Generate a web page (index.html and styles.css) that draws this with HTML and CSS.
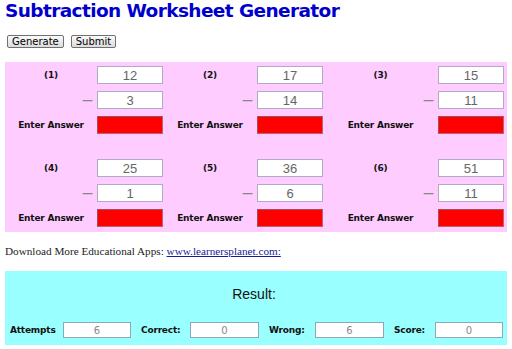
FILE: index.html
```html
<html>
    <head>
        <meta charset="UTF-8">
        <title>Subtraction Worksheet Generator</title>
        <link rel="stylesheet" href="styles.css">
    </head>
    <body>
        <h1 class="title">Subtraction Worksheet Generator</h1>
        <div class="actions">
            <button class="btn">Generate</button>
            <button class="btn">Submit</button>
        </div>

        <div class="sheet">
            <div class="problems">
                <div class="lbl">(1)</div><input class="num" value="12">
                <div class="lbl">(2)</div><input class="num" value="17">
                <div class="lbl">(3)</div><input class="num" value="15">
                <div class="minus">&mdash;</div><input class="num" value="3">
                <div class="minus">&mdash;</div><input class="num" value="14">
                <div class="minus">&mdash;</div><input class="num" value="11">
                <div class="lbl">Enter Answer</div><input class="answer">
                <div class="lbl">Enter Answer</div><input class="answer">
                <div class="lbl">Enter Answer</div><input class="answer">
            </div>
            <div class="problems">
                <div class="lbl">(4)</div><input class="num" value="25">
                <div class="lbl">(5)</div><input class="num" value="36">
                <div class="lbl">(6)</div><input class="num" value="51">
                <div class="minus">&mdash;</div><input class="num" value="1">
                <div class="minus">&mdash;</div><input class="num" value="6">
                <div class="minus">&mdash;</div><input class="num" value="11">
                <div class="lbl">Enter Answer</div><input class="answer">
                <div class="lbl">Enter Answer</div><input class="answer">
                <div class="lbl">Enter Answer</div><input class="answer">
            </div>
        </div>

        <p class="more">Download More Educational Apps: <a href="#">www.learnersplanet.com:</a></p>

        <div class="result">
            <div class="result-title">Result:</div>
            <div class="stats">
                <div class="stat first">Attempts</div><input class="score" value="6" readonly>
                <div class="stat">Correct:</div><input class="score" value="0" readonly>
                <div class="stat">Wrong:</div><input class="score" value="6" readonly>
                <div class="stat">Score:</div><input class="score" value="0" readonly>
            </div>
        </div>
    </body>
</html>
```

FILE: styles.css
```css
body {
    margin: 0 5px;
    font-family: "DejaVu Sans", Verdana, sans-serif;
    background: #fff;
}
.title {
    margin: 0;
    font-size: 18.5px;
    letter-spacing: -0.6px;
    line-height: 22px;
    font-weight: bold;
    color: #0000cc;
}
.actions {
    margin-top: 13px;
    padding-left: 2px;
    display: flex;
    gap: 7px;
    height: 27px;
}
.btn {
    font-family: "DejaVu Sans", Verdana, sans-serif;
    font-size: 10px;
    height: 13px;
    line-height: 11px;
    padding: 0 4px;
    border: 1px solid #707070;
    border-radius: 2px;
    background: linear-gradient(#fafafa, #dcdcdc);
    color: #000;
}
.sheet {
    background: #ffccff;
    padding: 4px 3px 5px 0;
}
.problems {
    display: grid;
    grid-template-columns: 92px 66px 94px 66px 115px 66px;
    row-gap: 7px;
    align-items: center;
}
.problems + .problems {
    margin-top: 25px;
}
.lbl {
    font-size: 9px;
    letter-spacing: -0.2px;
    font-weight: bold;
    text-align: center;
    color: #111;
}
.minus {
    text-align: right;
    padding-right: 4px;
    color: #888;
    font-size: 11px;
    font-weight: bold;
}
.num, .answer {
    box-sizing: border-box;
    width: 66px;
    height: 18px;
    margin: 0;
    padding: 0;
    font-family: "Liberation Sans", Arial, sans-serif;
    font-size: 13px;
    text-align: center;
    color: #666;
    outline: none;
}
.num {
    border: 1px solid #b0aac4;
    background: #fff;
}
.answer {
    border: 1px solid #c06070;
    border-top-color: #a05060;
    border-left-color: #a05060;
    background: #ff0000;
}
.more {
    margin: 12px 0 13px;
    font-family: "Liberation Serif", "Times New Roman", serif;
    font-size: 11.2px;
    line-height: 14px;
    color: #222;
}
.more a {
    color: #1a1a99;
}
.result {
    background: #99ffff;
    padding: 15px 4px 7px 0;
}
.result-title {
    text-align: center;
    font-family: "Liberation Sans", Arial, sans-serif;
    font-size: 14px;
    line-height: 16px;
    color: #111;
    margin-bottom: 20px;
}
.stats {
    display: grid;
    grid-template-columns: 58px 68px 59px 69px 56px 69px 51px 68px;
    align-items: center;
}
.stat {
    font-size: 9px;
    letter-spacing: -0.2px;
    font-weight: bold;
    color: #111;
    padding-left: 10px;
}
.stat.first {
    padding-left: 5px;
}
.score {
    box-sizing: border-box;
    height: 16px;
    margin: 0;
    padding: 0;
    border: 1px solid #8aa8b8;
    background: #fff;
    text-align: center;
    font-family: "DejaVu Sans", Verdana, sans-serif;
    font-size: 10px;
    color: #888;
    outline: none;
}
```
